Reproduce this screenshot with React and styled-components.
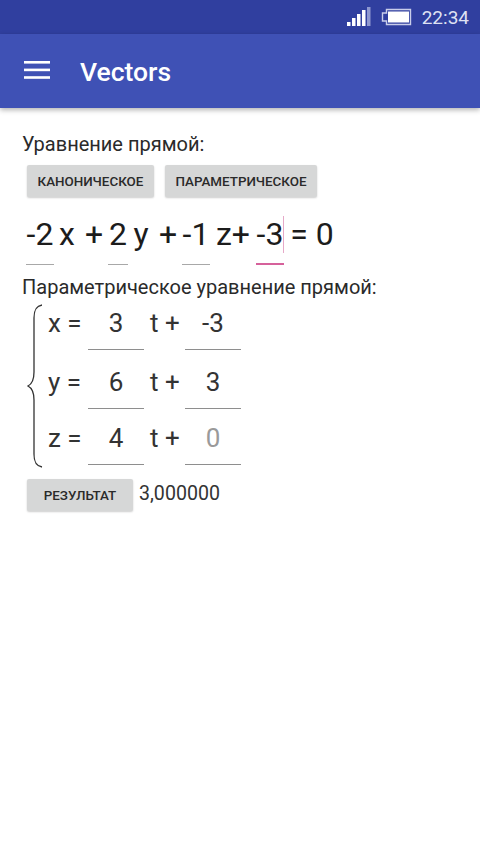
import React from "react";
import styled, { createGlobalStyle } from "styled-components";

const GlobalStyle = createGlobalStyle`
  html, body { margin: 0; padding: 0; background: #fff; }
  body { font-family: Roboto, "Noto Sans", sans-serif; color: #212121; }
`;

const Screen = styled.div`
  width: 480px;
  height: 854px;
  overflow: hidden;
  background: #fff;
`;

const StatusBar = styled.div`
  height: 34px;
  background: #303f9f;
  display: flex;
  align-items: center;
  justify-content: flex-end;
  padding-right: 11px;
  color: #dfe2f3;
  font-size: 19px;
`;

const Signal = styled.svg`
  width: 24px;
  height: 20px;
  margin-right: 10px;
`;

const Battery = styled.svg`
  width: 31px;
  height: 18px;
  margin-right: 10px;
`;

const AppBar = styled.header`
  height: 74px;
  background: #3f51b5;
  display: flex;
  align-items: center;
  padding-left: 24px;
  box-shadow: 0 2px 5px rgba(0, 0, 0, 0.3);
`;

const Burger = styled.svg`
  width: 27px;
  height: 20px;
  margin: 0 29px 2px 0;
`;

const Title = styled.h1`
  margin: 0;
  color: #fff;
  font-size: 26.5px;
  font-weight: 500;
`;

const Content = styled.main`
  padding: 25px 0 0 22px;
`;

const Label = styled.div`
  font-size: 20px;
  line-height: 22px;
  color: #2a2a2a;
`;

const ButtonRow = styled.div`
  display: flex;
  gap: 11px;
  margin: 10px 0 0 5px;
`;

const Button = styled.button`
  width: ${(p) => p.$w}px;
  height: 32px;
  padding: 0;
  border: 0;
  border-radius: 2px;
  background: #d6d7d7;
  box-shadow: 0 1px 2px rgba(0, 0, 0, 0.2);
  font-family: Roboto, sans-serif;
  font-size: 13.4px;
  font-weight: 500;
  color: #2a2a2a;
`;

const Equation = styled.div`
  display: flex;
  align-items: flex-start;
  height: 49px;
  margin: 19px 0 11px 4px;
  font-size: 32px;
  line-height: 36px;
  color: #1c1c1c;
`;

const Coef = styled.span`
  position: relative;
  width: ${(p) => p.$w}px;
  height: 49px;
  text-align: center;
  border-bottom: ${(p) => (p.$active ? "2px solid #d6619b" : "1px solid #a8a8a8")};
  box-sizing: border-box;
`;

const Caret = styled.i`
  position: absolute;
  right: 0;
  top: 0;
  width: 1px;
  height: 37px;
  background: #e6a9c8;
`;

const Sym = styled.span`
  width: ${(p) => p.$w}px;
  text-align: center;
  white-space: pre;
`;

const System = styled.div`
  display: flex;
  margin: 6px 0 0 5px;
`;

const Brace = styled.svg`
  width: 16px;
  height: 164px;
  flex: none;
  margin-right: 5px;
`;

const Rows = styled.div`
  display: flex;
  flex-direction: column;
  padding-top: 2px;
`;

const Row = styled.div`
  display: flex;
  align-items: flex-end;
  height: ${(p) => p.$h}px;
  font-size: 26px;
  line-height: 40px;
  color: #333;
`;

const RowLabel = styled.span`
  width: 40px;
  margin-bottom: 7px;
  white-space: pre;
`;

const Field = styled.span`
  width: 56px;
  padding-bottom: 6px;
  box-sizing: border-box;
  text-align: center;
  border-bottom: 1px solid #8e8e8e;
  color: ${(p) => (p.$hint ? "#9a9a9a" : "#333")};
`;

const Plus = styled.span`
  width: 41px;
  margin-bottom: 7px;
  padding-left: 6px;
  box-sizing: border-box;
  white-space: pre;
`;

const Result = styled.div`
  display: flex;
  align-items: center;
  gap: 6px;
  margin: 11px 0 0 5px;
`;

const Value = styled.span`
  font-size: 19.6px;
  color: #333;
  position: relative;
  top: -2px;
`;

export default function App() {
  return (
    <Screen>
      <GlobalStyle />
      <StatusBar>
        <Signal viewBox="0 0 24 20">
          <rect x="0" y="15" width="3.5" height="4" fill="#fff" />
          <rect x="5" y="11" width="3.5" height="8" fill="#fff" />
          <rect x="10" y="7" width="3.5" height="12" fill="#fff" />
          <rect x="15" y="3" width="3.5" height="16" fill="#fff" />
          <rect x="20" y="0" width="3.5" height="19" fill="#8f98d0" />
        </Signal>
        <Battery viewBox="0 0 31 18">
          <path d="M5.5 1.5H29.5V16.5H5.5L5.5 13H1.5V5H5.5Z" fill="none" stroke="#c9cdea" strokeWidth="1.4" />
          <rect x="7" y="3.5" width="21" height="11" fill="#fff" />
        </Battery>
        22:34
      </StatusBar>
      <AppBar>
        <Burger viewBox="0 0 27 20">
          <rect x="0" y="1" width="26" height="2.6" fill="#fff" />
          <rect x="0" y="8.6" width="26" height="2.6" fill="#fff" />
          <rect x="0" y="16.2" width="26" height="2.6" fill="#fff" />
        </Burger>
        <Title>Vectors</Title>
      </AppBar>
      <Content>
        <Label>Уравнение прямой:</Label>
        <ButtonRow>
          <Button $w={127}>КАНОНИЧЕСКОЕ</Button>
          <Button $w={152}>ПАРАМЕТРИЧЕСКОЕ</Button>
        </ButtonRow>
        <Equation>
          <Coef $w={28}>-2</Coef>
          <Sym $w={26}>x</Sym>
          <Sym $w={28}>+</Sym>
          <Coef $w={20}>2</Coef>
          <Sym $w={26}>y</Sym>
          <Sym $w={28}>+</Sym>
          <Coef $w={28}>-1</Coef>
          <Sym $w={46}>z+</Sym>
          <Coef $w={28} $active>
            -3
            <Caret />
          </Coef>
          <Sym $w={56}>= 0</Sym>
        </Equation>
        <Label>Параметрическое уравнение прямой:</Label>
        <System>
          <Brace viewBox="0 0 16 164">
            <path
              d="M15 1C9 2 7 6 7 14V68C7 76 5 80 1 82C5 84 7 88 7 96V150C7 158 9 162 15 163"
              fill="none"
              stroke="#333"
              strokeWidth="1.3"
            />
          </Brace>
          <Rows>
            <Row $h={44}>
              <RowLabel>x =</RowLabel>
              <Field>3</Field>
              <Plus>t +</Plus>
              <Field>-3</Field>
            </Row>
            <Row $h={59}>
              <RowLabel>y =</RowLabel>
              <Field>6</Field>
              <Plus>t +</Plus>
              <Field>3</Field>
            </Row>
            <Row $h={56}>
              <RowLabel>z =</RowLabel>
              <Field>4</Field>
              <Plus>t +</Plus>
              <Field $hint>0</Field>
            </Row>
          </Rows>
        </System>
        <Result>
          <Button $w={106}>РЕЗУЛЬТАТ</Button>
          <Value>3,000000</Value>
        </Result>
      </Content>
    </Screen>
  );
}
